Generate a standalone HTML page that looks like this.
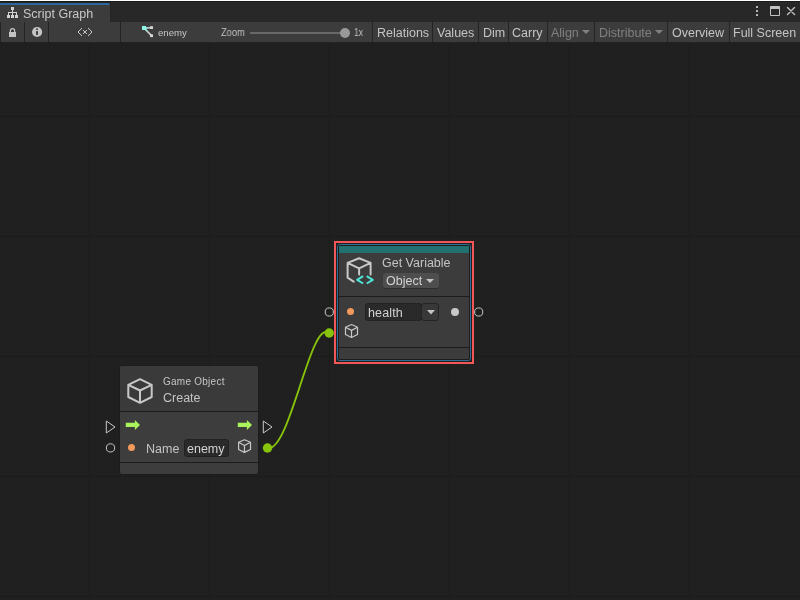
<!DOCTYPE html>
<html><head><meta charset="utf-8">
<style>
*{margin:0;padding:0;box-sizing:border-box}
html,body{width:800px;height:600px;overflow:hidden;background:#202020;font-family:"Liberation Sans",sans-serif;color:#c4c4c4}
.a{position:absolute}
.t{position:absolute;white-space:nowrap;line-height:1;will-change:transform}
.sep{position:absolute;top:22px;width:1px;height:20px;background:#242424}
</style></head><body>
<!-- grid -->
<svg class="a" style="left:0;top:0" width="800" height="600" shape-rendering="crispEdges">
<path stroke="#1f1f1f" stroke-width="1" d="M0 44.5H800M0 56.5H800M0 68.5H800M0 80.5H800M0 92.5H800M0 104.5H800M0 128.5H800M0 140.5H800M0 152.5H800M0 164.5H800M0 176.5H800M0 188.5H800M0 200.5H800M0 212.5H800M0 224.5H800M0 248.5H800M0 260.5H800M0 272.5H800M0 284.5H800M0 296.5H800M0 308.5H800M0 320.5H800M0 332.5H800M0 344.5H800M0 368.5H800M0 380.5H800M0 392.5H800M0 404.5H800M0 416.5H800M0 428.5H800M0 440.5H800M0 452.5H800M0 464.5H800M0 488.5H800M0 500.5H800M0 512.5H800M0 524.5H800M0 536.5H800M0 548.5H800M0 560.5H800M0 572.5H800M0 584.5H800"/>
<path stroke="#1f1f1f" stroke-width="1" d="M5.5 42V600M17.5 42V600M29.5 42V600M41.5 42V600M53.5 42V600M65.5 42V600M77.5 42V600M101.5 42V600M113.5 42V600M125.5 42V600M137.5 42V600M149.5 42V600M161.5 42V600M173.5 42V600M185.5 42V600M197.5 42V600M221.5 42V600M233.5 42V600M245.5 42V600M257.5 42V600M269.5 42V600M281.5 42V600M293.5 42V600M305.5 42V600M317.5 42V600M341.5 42V600M353.5 42V600M365.5 42V600M377.5 42V600M389.5 42V600M401.5 42V600M413.5 42V600M425.5 42V600M437.5 42V600M461.5 42V600M473.5 42V600M485.5 42V600M497.5 42V600M509.5 42V600M521.5 42V600M533.5 42V600M545.5 42V600M557.5 42V600M581.5 42V600M593.5 42V600M605.5 42V600M617.5 42V600M629.5 42V600M641.5 42V600M653.5 42V600M665.5 42V600M677.5 42V600M701.5 42V600M713.5 42V600M725.5 42V600M737.5 42V600M749.5 42V600M761.5 42V600M773.5 42V600M785.5 42V600M797.5 42V600"/>
<path stroke="#1b1b1b" stroke-width="1" d="M89.5 42V600M209.5 42V600M329.5 42V600M449.5 42V600M569.5 42V600M689.5 42V600M0 116.5H800M0 236.5H800M0 356.5H800M0 476.5H800M0 596.5H800"/>
</svg>

<!-- header -->
<div class="a" style="left:0;top:0;width:800px;height:1px;background:#ffffff"></div>
<div class="a" style="left:0;top:1px;width:800px;height:1px;background:#1a1a1a"></div>
<div class="a" style="left:0;top:2px;width:800px;height:20px;background:#282828"></div>
<!-- tab -->
<div class="a" style="left:0;top:2px;width:110px;height:1px;background:#252525"></div>
<div class="a" style="left:0;top:3px;width:110px;height:2px;background:#2c689e;border-top-right-radius:2px"></div>
<div class="a" style="left:0;top:5px;width:110px;height:17px;background:#3c3c3c"></div>
<div class="a" style="left:110px;top:2px;width:1px;height:20px;background:#242424"></div>
<!-- tree icon -->
<svg class="a" style="left:0;top:0" width="24" height="22" shape-rendering="crispEdges" fill="#d2d2d2">
<rect x="11" y="7" width="3" height="3"/><rect x="12" y="10" width="1" height="2"/>
<rect x="8" y="12" width="9" height="1"/>
<rect x="8" y="13" width="1" height="2"/><rect x="12" y="13" width="1" height="2"/><rect x="16" y="13" width="1" height="2"/>
<rect x="7" y="15" width="3" height="3"/><rect x="11" y="15" width="3" height="3"/><rect x="15" y="15" width="3" height="3"/>
</svg>
<div class="t" style="left:23px;top:8px;font-size:12.5px;color:#c8c8c8">Script Graph</div>

<!-- window controls -->
<div class="a" style="left:756px;top:6px;width:2px;height:2px;background:#c4c4c4;border-radius:0.6px"></div>
<div class="a" style="left:756px;top:10px;width:2px;height:2px;background:#c4c4c4;border-radius:0.6px"></div>
<div class="a" style="left:756px;top:14px;width:2px;height:2px;background:#c4c4c4;border-radius:0.6px"></div>
<div class="a" style="left:770px;top:6px;width:10px;height:10px;border:1px solid #c4c4c4;border-top-width:3px;border-radius:1px"></div>
<svg class="a" style="left:786px;top:7px" width="10" height="9"><path d="M1.5 0.5L8.5 7.5M8.5 0.5L1.5 7.5" stroke="#c4c4c4" stroke-width="1.4" stroke-linecap="round"/></svg>

<!-- toolbar -->
<div class="a" style="left:0;top:22px;width:800px;height:20px;background:#3c3c3c"></div>
<div class="sep" style="left:0"></div>
<div class="sep" style="left:24px"></div>
<div class="sep" style="left:48px"></div>
<div class="sep" style="left:120px"></div>
<div class="sep" style="left:372px"></div>
<div class="sep" style="left:432px"></div>
<div class="sep" style="left:478px"></div>
<div class="sep" style="left:508px"></div>
<div class="sep" style="left:547px"></div>
<div class="sep" style="left:594px"></div>
<div class="sep" style="left:667px"></div>
<div class="sep" style="left:729px"></div>
<div class="a" style="left:0;top:42px;width:800px;height:1px;background:#232323"></div>

<!-- lock -->
<svg class="a" style="left:0;top:22px" width="24" height="20">
<rect x="9" y="10" width="7" height="5" fill="#c4c4c4"/>
<path d="M10.35 10.5V8.75a2.15 2.15 0 0 1 4.3 0V10.5" fill="none" stroke="#c4c4c4" stroke-width="1.2"/>
</svg>
<!-- info -->
<svg class="a" style="left:25px;top:22px" width="23" height="20">
<circle cx="12.1" cy="10" r="5.1" fill="#c4c4c4"/>
<rect x="11" y="6.5" width="2" height="1.4" fill="#3c3c3c"/>
<rect x="11" y="9.2" width="2" height="3.6" fill="#3c3c3c"/>
</svg>
<!-- <x> -->
<svg class="a" style="left:0;top:0" width="100" height="42" shape-rendering="crispEdges"><path fill="#c8c8c8" d="M81 28h1v1h-1zM80 29h1v1h-1zM79 30h1v1h-1zM78 31h1v1h-1zM78 32h1v1h-1zM79 33h1v1h-1zM80 34h1v1h-1zM81 35h1v1h-1zM88 28h1v1h-1zM89 29h1v1h-1zM90 30h1v1h-1zM91 31h1v1h-1zM91 32h1v1h-1zM90 33h1v1h-1zM89 34h1v1h-1zM88 35h1v1h-1zM83 30h1v1h-1zM86 30h1v1h-1zM84 31h1v1h-1zM85 31h1v1h-1zM84 32h1v1h-1zM85 32h1v1h-1zM83 33h1v1h-1zM86 33h1v1h-1z"/></svg>
<!-- graph icon -->
<svg class="a" style="left:138px;top:22px" width="20" height="20">
<path d="M6 6L13.5 5.8M6 6L13.5 13.6" stroke="#d0d0d0" stroke-width="1.6"/>
<path d="M6 6L9.5 5.9M6 6L9 9" stroke="#8ee8d8" stroke-width="1.6"/>
<rect x="4" y="4" width="4" height="4" fill="#8ff5e5"/>
<rect x="12" y="4.2" width="3" height="2.8" fill="#d4d4d4"/>
<rect x="12" y="12.3" width="3" height="2.8" fill="#d4d4d4"/>
</svg>
<div class="t" style="left:158px;top:28px;font-size:9.6px;color:#c8c8c8">enemy</div>
<div class="t" style="left:221px;top:27.5px;font-size:10px;transform:scaleX(0.93);transform-origin:0 0">Zoom</div>
<div class="a" style="left:250px;top:32px;width:95px;height:2px;background:#686868"></div>
<div class="a" style="left:340px;top:28px;width:10px;height:10px;border-radius:50%;background:#999999"></div>
<div class="t" style="left:354px;top:27.5px;font-size:10px;transform:scaleX(0.85);transform-origin:0 0">1x</div>

<div class="t" style="left:377px;top:27px;font-size:12.5px">Relations</div>
<div class="t" style="left:437px;top:27px;font-size:12.5px">Values</div>
<div class="t" style="left:483px;top:27px;font-size:12.5px">Dim</div>
<div class="t" style="left:512px;top:27px;font-size:12.5px">Carry</div>
<div class="t" style="left:551px;top:27px;font-size:12.5px;color:#808080">Align</div>
<svg class="a" style="left:582px;top:30px" width="8" height="4"><path d="M0 0H8L4 4Z" fill="#808080"/></svg>
<div class="t" style="left:599px;top:27px;font-size:12.5px;color:#808080">Distribute</div>
<svg class="a" style="left:655px;top:30px" width="8" height="4"><path d="M0 0H8L4 4Z" fill="#808080"/></svg>
<div class="t" style="left:672px;top:27px;font-size:12.5px">Overview</div>
<div class="t" style="left:733px;top:27px;font-size:12.5px">Full Screen</div>

<!-- ===== Game Object Create node ===== -->
<div class="a" style="left:119px;top:365px;width:140px;height:110px;background:#3d3d3d;border:1px solid #1c1c1c;border-radius:3px"></div>
<div class="a" style="left:120px;top:366px;width:138px;height:45px;background:#3a3a3a;border-radius:2px 2px 0 0"></div>
<div class="a" style="left:120px;top:411px;width:138px;height:1px;background:#1c1c1c"></div>
<div class="a" style="left:120px;top:462px;width:138px;height:1px;background:#1c1c1c"></div>
<svg class="a" style="left:120px;top:366px" width="40" height="44" fill="none" stroke="#c8c8c8" stroke-width="2" stroke-linejoin="round">
<path d="M20 13.2L31.7 18.8V31L20 36.8L8.3 31V18.8Z"/>
<path d="M8.3 18.8L20 24.5L31.7 18.8M20 24.5V36.8"/>
</svg>
<div class="t" style="left:163px;top:377px;font-size:10px;letter-spacing:0.25px">Game Object</div>
<div class="t" style="left:163px;top:392px;font-size:12.5px">Create</div>

<!-- control ports -->
<svg class="a" style="left:100px;top:415px" width="180" height="45" fill="none" stroke="#c8c8c8" stroke-width="1">
<path d="M6.3 6L15 12L6.3 18Z"/>
<circle cx="10.5" cy="32.9" r="4.1"/>
<path d="M163.3 6L172 12L163.3 18Z"/>
</svg>
<!-- green arrows -->
<svg class="a" style="left:125px;top:419px" width="16" height="12"><path d="M0.75 3.75H9.9V0.9L15 5.95L9.9 11V8.1H0.75Z" fill="#a9f35b"/></svg>
<svg class="a" style="left:237px;top:419px" width="16" height="12"><path d="M0.75 3.75H9.9V0.9L15 5.95L9.9 11V8.1H0.75Z" fill="#a9f35b"/></svg>
<div class="a" style="left:128px;top:444px;width:7px;height:7px;border-radius:50%;background:#f29a5c"></div>
<div class="t" style="left:146px;top:443px;font-size:12.5px">Name</div>
<div class="a" style="left:184px;top:439px;width:45px;height:18px;background:#2a2a2a;border:1px solid #222;border-radius:3px"></div>
<div class="t" style="left:187px;top:443px;font-size:12.5px;color:#d2d2d2">enemy</div>
<svg class="a" style="left:236px;top:437px" width="18" height="18" fill="none" stroke="#c8c8c8" stroke-width="1.2" stroke-linejoin="round">
<path d="M8.45 2.7L14.5 5.2V12.5L8.45 15.4L2.6 12.5V5.2Z"/>
<path d="M2.6 5.2L8.45 8.6L14.5 5.2M8.45 8.6V15.4"/>
</svg>

<!-- edge -->
<svg class="a" style="left:0;top:0" width="800" height="600">
<path d="M267.5 448C289.6 454 310.6 317.8 329 333" fill="none" stroke="#88c40a" stroke-width="1.8"/>
<circle cx="267.5" cy="448" r="4.7" fill="#88c40a"/>
<circle cx="329.2" cy="333" r="4.7" fill="#88c40a"/>
</svg>

<!-- ===== Get Variable node ===== -->
<div class="a" style="left:334px;top:241px;width:140px;height:123px;border:2px solid #f25757"></div>
<div class="a" style="left:337px;top:244px;width:134px;height:117px;border:1px solid #2f6e96;border-radius:3px"></div>
<div class="a" style="left:338px;top:245px;width:132px;height:115px;background:#3c3c3c;border:1px solid #1c1c1c;border-radius:2px"></div>
<div class="a" style="left:339px;top:246px;width:130px;height:7px;background:#237070"></div>
<div class="a" style="left:339px;top:296px;width:130px;height:1px;background:#1c1c1c"></div>
<div class="a" style="left:339px;top:347px;width:130px;height:1px;background:#1c1c1c"></div>
<svg class="a" style="left:339px;top:253px" width="40" height="40" fill="none" stroke-linejoin="round">
<path d="M14.7 28.6L8.6 24.6V9.9L20.1 5.3L31.6 9.9V21.4M8.6 9.9L20.1 15.4L31.6 9.9M20.1 15.4V21.4" stroke="#c8c8c8" stroke-width="2" stroke-linecap="round"/>
<path d="M24.1 23.1L18.1 26.8L24.1 30.5M27.7 23.1L33.8 26.8L27.7 30.5" stroke="#50e6d6" stroke-width="2"/>
</svg>
<div class="t" style="left:382px;top:257px;font-size:12.5px">Get Variable</div>
<div class="a" style="left:383px;top:273px;width:56px;height:16px;background:#4e4e4e;border-radius:3px;border-bottom:1px solid #2e2e2e"></div>
<div class="t" style="left:386px;top:275px;font-size:12.5px;color:#d2d2d2">Object</div>
<svg class="a" style="left:426px;top:279px" width="8" height="4"><path d="M0 0H8L4 4Z" fill="#c4c4c4"/></svg>

<div class="a" style="left:347px;top:308px;width:7px;height:7px;border-radius:50%;background:#f29a5c"></div>
<div class="a" style="left:365px;top:303px;width:57px;height:18px;background:#2a2a2a;border:1px solid #222;border-radius:3px"></div>
<div class="a" style="left:421px;top:303px;width:18px;height:18px;background:#383838;border:1px solid #242424;border-radius:3px"></div>
<div class="t" style="left:368px;top:307px;font-size:12.5px;letter-spacing:0.15px;color:#d2d2d2">health</div>
<svg class="a" style="left:427px;top:310px" width="8" height="5"><path d="M0 0H8L4 4.5Z" fill="#c4c4c4"/></svg>
<div class="a" style="left:451px;top:308px;width:8px;height:8px;border-radius:50%;background:#c8c8c8"></div>
<svg class="a" style="left:320px;top:300px" width="170" height="25" fill="none" stroke="#c8c8c8" stroke-width="1">
<circle cx="9.3" cy="12" r="4.1"/>
<circle cx="158.7" cy="12" r="4.1"/>
</svg>
<svg class="a" style="left:339px;top:320px" width="24" height="22" fill="none" stroke="#c8c8c8" stroke-width="1.2" stroke-linejoin="round">
<path d="M12.5 4.5L18.5 7.2V14.5L12.5 17.5L6.5 14.5V7.2Z"/>
<path d="M6.5 7.2L12.5 10.4L18.5 7.2M12.5 10.4V17.5"/>
</svg>

</body></html>
